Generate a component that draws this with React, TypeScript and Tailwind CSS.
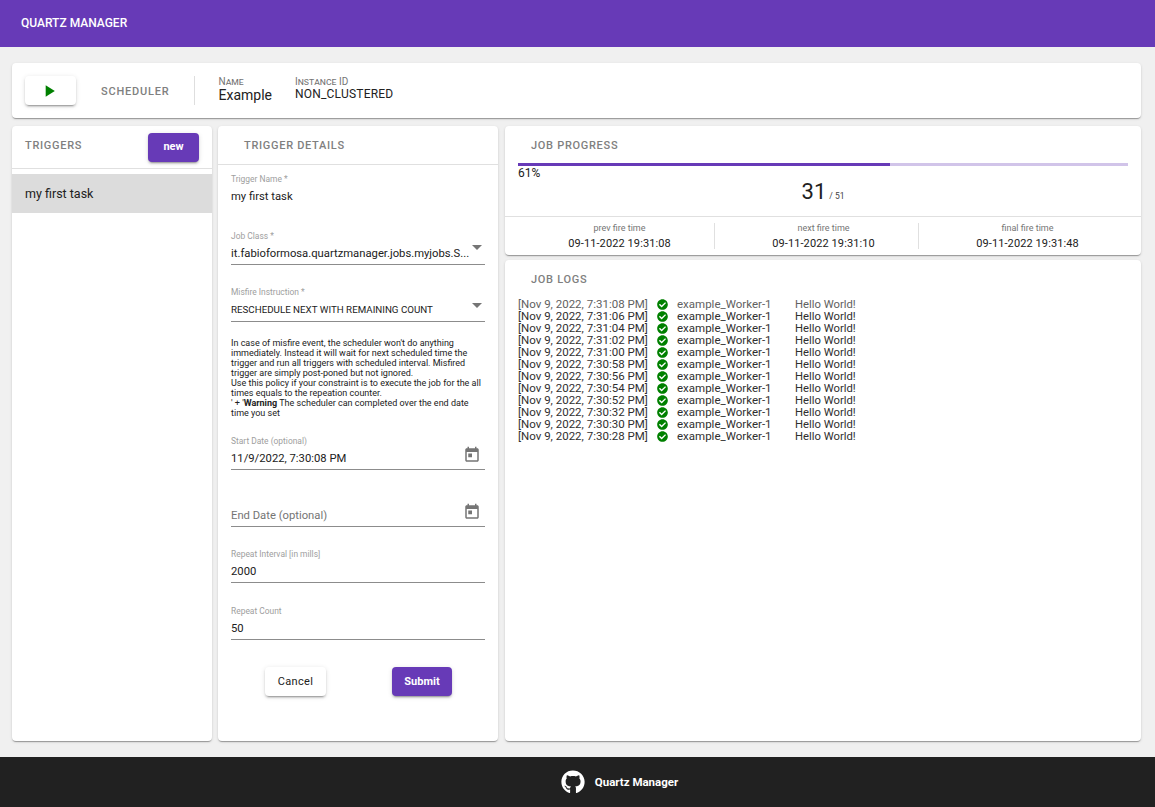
import React from "react";
import { FaCheckCircle, FaGithub } from "react-icons/fa";

const logs = [
  "7:31:08",
  "7:31:06",
  "7:31:04",
  "7:31:02",
  "7:31:00",
  "7:30:58",
  "7:30:56",
  "7:30:54",
  "7:30:52",
  "7:30:32",
  "7:30:30",
  "7:30:28",
];

const cardClass =
  "bg-white rounded-[4px] shadow-[0_2px_1px_-1px_rgba(0,0,0,0.2),0_1px_1px_0_rgba(0,0,0,0.14),0_1px_3px_0_rgba(0,0,0,0.12)]";
const raisedClass =
  "rounded-[4px] shadow-[0_3px_1px_-2px_rgba(0,0,0,0.2),0_2px_2px_0_rgba(0,0,0,0.14),0_1px_5px_0_rgba(0,0,0,0.12)]";

const Calendar = () => (
  <svg viewBox="0 0 24 24" className="w-[18px] h-[18px] fill-[#757575]">
    <path d="M19 3h-1V1h-2v2H8V1H6v2H5c-1.11 0-1.99.9-1.99 2L3 19c0 1.1.89 2 2 2h14c1.1 0 2-.9 2-2V5c0-1.1-.9-2-2-2zm0 16H5V8h14v11zM7 10h5v5H7z" />
  </svg>
);

const Caret = () => (
  <span className="w-0 h-0 border-l-[5px] border-r-[5px] border-t-[5px] border-l-transparent border-r-transparent border-t-[#757575]" />
);

const Field = ({
  label,
  value,
  top,
  height = "h-[36px]",
  small,
  placeholder,
  underline = true,
  right,
}: {
  label?: string;
  value?: string;
  top: string;
  height?: string;
  small?: boolean;
  placeholder?: string;
  underline?: boolean;
  right?: React.ReactNode;
}) => (
  <div
    className={`${top} ${height} flex flex-col relative ${
      underline ? "border-b border-[#8c8c8c]" : ""
    }`}
  >
    <div className="h-[14px] text-[8.44px] leading-[14px] text-[#9e9e9e] whitespace-nowrap">
      {label}
    </div>
    <div
      className={`mt-[2px] h-[18px] leading-[18px] whitespace-nowrap text-[#212121] ${
        small ? "text-[9.75px]" : "text-[11.25px]"
      }`}
    >
      {value}
      {placeholder && <span className="text-[#757575]">{placeholder}</span>}
    </div>
    {right}
  </div>
);

const SectionTitle = ({ children, className }: { children: React.ReactNode; className?: string }) => (
  <div className={`text-[11px] font-medium tracking-[0.7px] text-[#808080] uppercase ${className ?? ""}`}>
    {children}
  </div>
);

const FireTime = ({ label, value, className }: { label: string; value: string; className: string }) => (
  <div className={`flex flex-col items-center h-[26px] ${className}`}>
    <div className="-mt-px text-[9px] leading-[12px] text-[#757575]">{label}</div>
    <div className="mt-[3px] text-[11px] leading-[14px] text-[#212121] tracking-[0.1px]">{value}</div>
  </div>
);

const App = () => {
  return (
    <div className="w-[1155px] h-[807px] bg-[#f0f0f0] flex flex-col overflow-hidden font-['Roboto',sans-serif]">
      <div className="h-[47px] bg-[#673ab7] flex items-center pl-[21px] pb-[2px] text-white text-[12px] font-medium">
        QUARTZ MANAGER
      </div>

      <div className={`${cardClass} mt-4 ml-3 w-[1129px] h-[55px] flex items-center pl-[13px]`}>
        <div className={`${raisedClass} w-[51px] h-[29px] bg-white flex items-center justify-center`}>
          <svg viewBox="0 0 24 24" className="w-5 h-5 fill-[#008000] mr-[3px]">
            <path d="M8 5v14l11-7z" />
          </svg>
        </div>
        <div className="ml-[25px] mt-[4px] text-[11px] font-medium tracking-[0.8px] text-[#808080]">SCHEDULER</div>
        <div className="ml-[24px] w-px h-[29px] bg-[#dedede]" />
        <div className="ml-6 flex flex-col -mt-px">
          <div className="leading-[10px] text-[#757575] [font-variant:small-caps] text-[10px]">Name</div>
          <div className="text-[14px] leading-[16px] text-[#212121]">Example</div>
        </div>
        <div className="ml-[23px] flex flex-col -mt-[3px]">
          <div className="text-[10px] leading-[10px] text-[#757575] [font-variant:small-caps]">Instance ID</div>
          <div className="text-[12px] leading-[14px] text-[#212121] tracking-[0.2px]">NON_CLUSTERED</div>
        </div>
      </div>

      <div className="mt-2 ml-3 h-[615px] flex">
        <div className={`${cardClass} w-[200px] flex flex-col`}>
          <div className="h-[43px] border-b border-[#e0e0e0] flex items-center justify-between pl-[13px] pr-[13px]">
            <SectionTitle className="-mt-[1px]">Triggers</SectionTitle>
            <div className={`${raisedClass} w-[51px] h-[29px] pt-px bg-[#673ab7] text-white text-[11px] font-bold flex items-center justify-center`}>
              new
            </div>
          </div>
          <div className="mt-[5px] h-[39px] pt-[2px] bg-[#dcdcdc] flex items-center pl-[13px] text-[12.5px] text-[#212121]">
            my first task
          </div>
        </div>

        <div className={`${cardClass} ml-[6px] w-[280px] flex flex-col`}>
          <div className="h-[39px] pt-[2px] border-b border-[#e0e0e0] flex items-center pl-[26px]">
            <SectionTitle>Trigger Details</SectionTitle>
          </div>
          <div className="px-[13px] flex flex-col">
            <Field top="mt-[7px]" label="Trigger Name *" value="my first task" underline={false} />
            <Field
              top="mt-[21px]"
              label="Job Class *"
              value="it.fabioformosa.quartzmanager.jobs.myjobs.S..."
              right={
                <div className="absolute right-[3px] top-[16px] flex">
                  <Caret />
                </div>
              }
            />
            <Field
              top="mt-[20px]"
              height="h-[37px]"
              label="Misfire Instruction *"
              value="RESCHEDULE NEXT WITH REMAINING COUNT"
              small
              right={
                <div className="absolute right-[3px] top-[18px] flex">
                  <Caret />
                </div>
              }
            />
            <div className="mt-[16px] h-[80px] text-[9px] leading-[10px] text-[#212121]">
              In case of misfire event, the scheduler won't do anything immediately. Instead it will wait for next
              scheduled time the trigger and run all triggers with scheduled interval. Misfired trigger are simply
              post-poned but not ignored.
              <br />
              Use this policy if your constraint is to execute the job for the all times equals to the repeation
              counter.
              <br />' + '<b className="font-bold">Warning</b> The scheduler can completed over the end date time you set
            </div>
            <Field
              top="mt-[16px]"
              label="Start Date (optional)"
              value="11/9/2022, 7:30:08 PM"
              right={
                <div className="absolute right-[4px] top-[12px]">
                  <Calendar />
                </div>
              }
            />
            <Field
              top="mt-[21px]"
              placeholder="End Date (optional)"
              right={
                <div className="absolute right-[4px] top-[12px]">
                  <Calendar />
                </div>
              }
            />
            <Field top="mt-[20px]" label="Repeat Interval [in mills]" value="2000" />
            <Field top="mt-[21px]" label="Repeat Count" value="50" />
            <div className="mt-[27px] flex">
              <div className={`${raisedClass} ml-[34px] w-[61px] h-[29px] pt-px bg-white text-[11px] tracking-[0.3px] text-[#212121] flex items-center justify-center`}>
                Cancel
              </div>
              <div className={`${raisedClass} ml-[66px] w-[60px] h-[29px] pt-px bg-[#673ab7] text-white text-[11px] font-bold flex items-center justify-center`}>
                Submit
              </div>
            </div>
          </div>
        </div>

        <div className="ml-[7px] w-[636px] flex flex-col gap-[5px]">
          <div className={`${cardClass} h-[129px] flex flex-col`}>
            <SectionTitle className="ml-[26px] mt-[13px] leading-[14px]">Job Progress</SectionTitle>
            <div className="mx-[13px] mt-[10px] h-[3px] bg-[#d1c4e9]">
              <div className="h-full bg-[#673ab7]" style={{ width: "61%" }} />
            </div>
            <div className="ml-[13px] text-[12px] leading-[14px] text-[#212121]">61%</div>
            <div className="h-[29px] -mt-[3px] flex items-end justify-center text-[#212121]">
              <span className="text-[22px] leading-[29px]">31</span>
              <span className="ml-[3px] mb-[4px] text-[8.5px] leading-[12px] text-[#424242]">/ 51</span>
            </div>
            <div className="mt-[10px] border-t border-[#e0e0e0] flex pt-[6px] h-[38px]">
              <FireTime label="prev fire time" value="09-11-2022 19:31:08" className="w-[210px] pl-[20px] border-r border-[#e0e0e0]" />
              <FireTime label="next fire time" value="09-11-2022 19:31:10" className="w-[204px] pl-[14px] border-r border-[#e0e0e0]" />
              <FireTime label="final fire time" value="09-11-2022 19:31:48" className="flex-1 pr-[5px]" />
            </div>
          </div>

          <div className={`${cardClass} flex-1 flex flex-col`}>
            <SectionTitle className="ml-[26px] mt-[13px] leading-[14px]">Job Logs</SectionTitle>
            <div className="ml-[13px] mt-[11px] flex flex-col">
              {logs.map((t, i) => (
                <div
                  key={t}
                  className={`flex items-center h-[12px] text-[11.5px] leading-[12px] whitespace-nowrap ${
                    i === 0 ? "text-[#616161]" : "text-[#303030]"
                  }`}
                >
                  <span className="w-[139px]">[Nov 9, 2022, {t} PM]</span>
                  <FaCheckCircle className="w-[11px] h-[11px] text-[#008000]" />
                  <span className="ml-[9px] w-[118px]">example_Worker-1</span>
                  <span className="text-[11.25px] pt-px">Hello World!</span>
                </div>
              ))}
            </div>
          </div>
        </div>
      </div>

      <div className="mt-auto h-[50px] bg-[#212121] flex items-center justify-center pl-[84px] text-white text-[11.5px] font-bold">
        <FaGithub className="w-6 h-6 mr-[10px]" />
        <span className="pt-px">Quartz Manager</span>
      </div>
    </div>
  );
};

export default App;
